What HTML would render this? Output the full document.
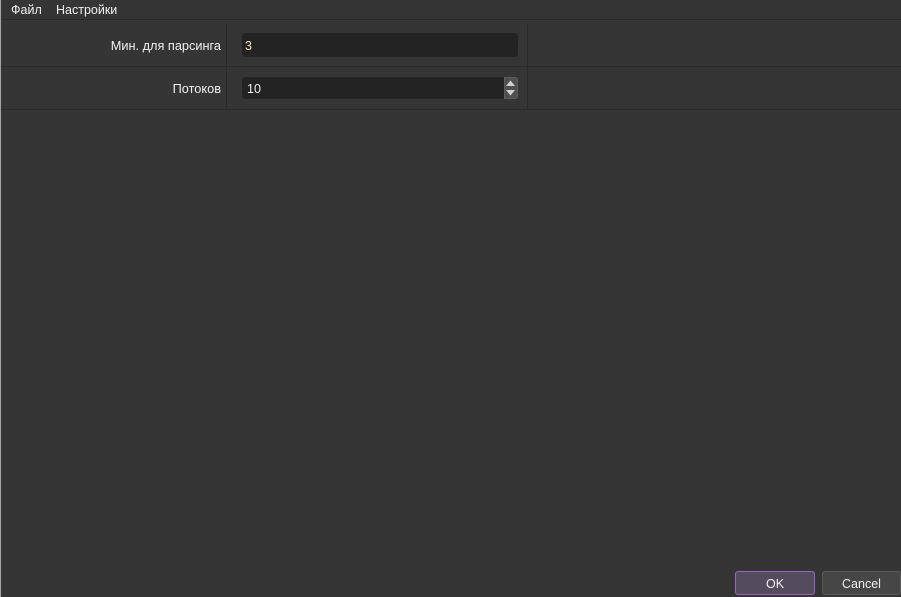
<!DOCTYPE html>
<html>
<head>
<meta charset="utf-8">
<style>
html,body{margin:0;padding:0;width:901px;height:597px;overflow:hidden;background:#353535;}
body{position:relative;font-family:"Liberation Sans","DejaVu Sans",sans-serif;font-size:12.5px;color:#f0f0f0;}
.a{position:absolute;}
.t{position:absolute;white-space:nowrap;line-height:16px;}
.line{position:absolute;background:#2a2a2a;}
.input{position:absolute;background:#232323;border-radius:3px;}
.btn{position:absolute;box-sizing:border-box;border-radius:3px;text-align:center;}
</style>
</head>
<body>
<div class="a" style="left:0;top:0;width:1px;height:597px;background:#a8a5a0;"></div>

<div class="t" style="left:11px;top:2px;">Файл</div>
<div class="t" style="left:56px;top:2px;">Настройки</div>

<div class="line" style="left:1px;top:19px;width:900px;height:1px;"></div>
<div class="line" style="left:1px;top:66px;width:900px;height:1px;"></div>
<div class="line" style="left:1px;top:109px;width:900px;height:1px;"></div>
<div class="line" style="left:226px;top:24px;width:1px;height:85px;"></div>
<div class="line" style="left:527px;top:24px;width:1px;height:85px;"></div>

<div class="t" style="right:680px;top:38px;font-size:12.75px;">Мин. для парсинга</div>
<div class="t" style="right:680px;top:81px;font-size:12.75px;">Потоков</div>

<div class="input" style="left:242px;top:33px;width:276px;height:24px;"></div>
<div class="t" style="left:245px;top:38px;color:#f4e3b0;">3</div>

<div class="input" style="left:242px;top:77px;width:276px;height:22px;"></div>
<div class="t" style="left:247px;top:81px;">10</div>
<div class="a" style="left:504px;top:77px;width:14px;height:22px;box-sizing:border-box;background:#505050;border:1px solid #5c5c5c;border-radius:0 3px 3px 0;"></div>
<svg class="a" style="left:504px;top:77px;" width="14" height="22" viewBox="0 0 14 22">
<path d="M6.5 3.5 L11 9 L2 9 Z" fill="#d0d0d0"/>
<path d="M2 13 L11 13 L6.5 18.5 Z" fill="#d0d0d0"/>
</svg>

<div class="btn" style="left:735px;top:571px;width:80px;height:24px;background:#544c5c;border:1px solid #9b62c4;line-height:24px;">OK</div>
<div class="btn" style="left:822px;top:571px;width:79px;height:24px;background:#464646;border:1px solid #5a5a5a;line-height:24px;">Cancel</div>
</body>
</html>
